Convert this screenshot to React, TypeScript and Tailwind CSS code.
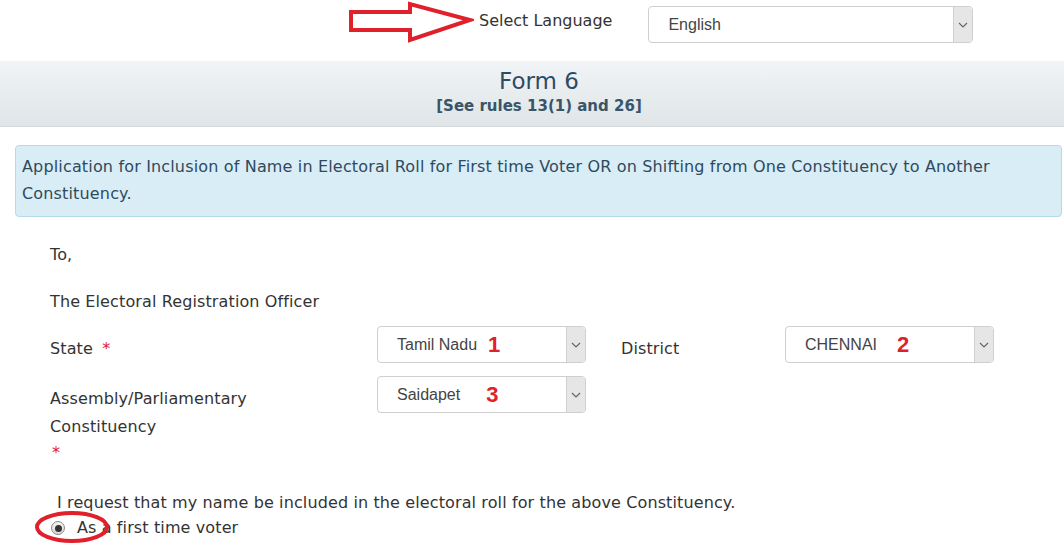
import React from "react";

function Chevron() {
  return (
    <svg width="10" height="6" viewBox="0 0 10 6" fill="none">
      <path d="M1 1 L5 5 L9 1" stroke="#666" strokeWidth="1.2" />
    </svg>
  );
}

function FakeSelect({ value, num, numGap, className }: { value: string; num?: string; numGap?: string; className: string }) {
  return (
    <div className={`flex h-[37px] rounded-[4px] border border-[#cfcfcf] bg-white overflow-hidden ${className}`}>
      <div className="flex flex-1 items-center pl-[19px] text-[16px] tracking-normal text-[#444]" style={{ fontFamily: '"Liberation Sans", Arial, sans-serif' }}>
        <span>{value}</span>
        {num && (
          <span className={`${numGap} text-[22px] font-bold text-[#e0202a]`} style={{ fontFamily: '"Liberation Sans", Arial, sans-serif' }}>
            {num}
          </span>
        )}
      </div>
      <div className="flex w-[19px] items-center justify-center border-l border-[#cfcfcf] bg-[#e6e6e6]">
        <Chevron />
      </div>
    </div>
  );
}

export default function App() {
  return (
    <div className="w-[1064px] h-[557px] overflow-hidden bg-white text-[#333]" style={{ fontFamily: '"DejaVu Sans", Verdana, sans-serif' }}>
      {/* top row */}
      <div className="flex h-[61px] items-start">
        <svg className="ml-[348px] mt-[1px]" width="126" height="42" viewBox="0 0 126 42">
          <polygon points="3,11 62,11 62,3 122,19 62,39 62,29 3,29" fill="none" stroke="#e0202a" strokeWidth="4" strokeLinejoin="miter" />
        </svg>
        <div className="ml-[5px] mt-[9px] text-[16px] text-[#333]">Select Language</div>
        <FakeSelect value="English" className="ml-[36px] mt-[6px] w-[325px]" />
      </div>

      {/* header band */}
      <div className="flex h-[66px] flex-col items-center bg-gradient-to-b from-[#f1f4f6] to-[#dfe5e8] border-b border-[#d5dadd] pl-[14px]">
        <div className="mt-[5px] text-[23px] leading-[30px] text-[#2e4b5f]">Form 6</div>
        <div className="text-[15px] font-bold leading-[20px] text-[#3a5468]">[See rules 13(1) and 26]</div>
      </div>

      {/* alert */}
      <div className="ml-[15px] mr-[2px] mt-[18px] rounded-[4px] border border-[#b4dbe8] bg-[#d9edf7] px-[6px] pt-[7px] pb-[9px] text-[16px] leading-[27px] tracking-[0.16px] text-[#2f4a5c]">
        Application for Inclusion of Name in Electoral Roll for First time Voter OR on Shifting from One Constituency to Another Constituency.
      </div>

      {/* form */}
      <div className="pl-[50px] text-[16px] tracking-[0.12px] text-[#333]">
        <div className="mt-[28px] leading-[20px]">To,</div>
        <div className="mt-[27px] leading-[20px]">The Electoral Registration Officer</div>

        <div className="mt-[14px] flex items-start">
          <div className="w-[327px] pt-[13px] leading-[20px]">
            State <span className="ml-[4px] text-[#e0202a]">*</span>
          </div>
          <FakeSelect value="Tamil Nadu" num="1" numGap="ml-[11px]" className="w-[209px]" />
          <div className="ml-[35px] w-[164px] pt-[13px] leading-[20px]">District</div>
          <FakeSelect value="CHENNAI" num="2" numGap="ml-[20px]" className="w-[209px]" />
        </div>

        <div className="mt-[13px] flex items-start">
          <div className="w-[327px] pt-[9px] leading-[28px]">
            <div>Assembly/Parliamentary</div>
            <div>Constituency</div>
            <div className="pl-[2px] leading-[24px] text-[#e0202a]">*</div>
          </div>
          <FakeSelect value="Saidapet" num="3" numGap="ml-[26px]" className="w-[209px]" />
        </div>

        <div className="mt-[27px] pl-[7px] leading-[22px]">I request that my name be included in the electoral roll for the above Constituency.</div>
        <div className="relative mt-[3px] flex items-center pl-[1px] leading-[22px]">
          <span className="flex h-[14px] w-[14px] items-center justify-center rounded-full border border-[#888] bg-gradient-to-b from-[#f4f4f4] to-[#d8d8d8]">
            <span className="h-[7px] w-[7px] rounded-full bg-[#333]" />
          </span>
          <span className="ml-[12px]">As a first time voter</span>
          <svg className="absolute left-[-16px] top-[-8px]" width="76" height="36" viewBox="0 0 76 36">
            <ellipse cx="38" cy="18" rx="35" ry="14" fill="none" stroke="#e0202a" strokeWidth="4" />
          </svg>
        </div>
      </div>
    </div>
  );
}
